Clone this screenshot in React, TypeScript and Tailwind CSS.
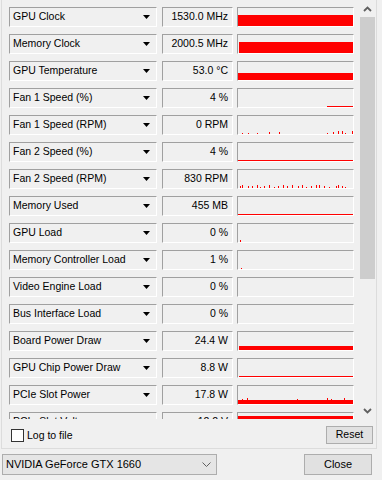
import React from 'react';

type Bar = { x: number; w: number; h: number };

type Sensor = { name: string; value: string; bars: Bar[] };

const spikes = (xs: number[], hs: number[]): Bar[] =>
    xs.map((x, i) => ({ x, w: 1, h: hs[i % hs.length] }));

const sensors: Sensor[] = [
    { name: 'GPU Clock', value: '1530.0 MHz', bars: [{ x: 0, w: 115, h: 11 }] },
    { name: 'Memory Clock', value: '2000.5 MHz', bars: [{ x: 1, w: 114, h: 11 }] },
    { name: 'GPU Temperature', value: '53.0 °C', bars: [{ x: 0, w: 115, h: 7 }] },
    { name: 'Fan 1 Speed (%)', value: '4 %', bars: [{ x: 89, w: 26, h: 1 }] },
    {
        name: 'Fan 1 Speed (RPM)',
        value: '0 RPM',
        bars: spikes([4, 10, 19, 31, 41, 89, 95, 100, 104, 107, 114], [1, 1, 1, 2, 2, 1, 2, 3, 3, 1, 3]),
    },
    { name: 'Fan 2 Speed (%)', value: '4 %', bars: [{ x: 0, w: 115, h: 1 }] },
    {
        name: 'Fan 2 Speed (RPM)',
        value: '830 RPM',
        bars: spikes(
            [2, 4, 10, 14, 19, 22, 26, 31, 36, 40, 45, 49, 54, 60, 64, 68, 73, 78, 81, 86, 91, 98, 100, 104, 107],
            [2, 3, 2, 2, 3, 1, 2, 3, 1, 2, 3, 2, 3, 2, 3, 1, 2, 3, 3, 2, 1, 2, 3, 2, 1]
        ),
    },
    { name: 'Memory Used', value: '455 MB', bars: [{ x: 0, w: 115, h: 1 }] },
    { name: 'GPU Load', value: '0 %', bars: [{ x: 2, w: 1, h: 2 }] },
    { name: 'Memory Controller Load', value: '1 %', bars: [{ x: 3, w: 1, h: 1 }] },
    { name: 'Video Engine Load', value: '0 %', bars: [] },
    { name: 'Bus Interface Load', value: '0 %', bars: [] },
    { name: 'Board Power Draw', value: '24.4 W', bars: [{ x: 1, w: 114, h: 4 }] },
    { name: 'GPU Chip Power Draw', value: '8.8 W', bars: [{ x: 1, w: 114, h: 1 }] },
    {
        name: 'PCIe Slot Power',
        value: '17.8 W',
        bars: [{ x: 0, w: 115, h: 4 }, ...spikes([4, 9, 59, 89, 93, 106], [5, 6, 5, 6, 5, 6])],
    },
    { name: 'PCIe Slot Voltage', value: '12.2 V', bars: [{ x: 0, w: 115, h: 15 }] },
];

const Chevron: React.FC<{ up?: boolean }> = ({ up }) => (
    <svg width="9" height="6" viewBox="0 0 9 6">
        <path
            d={up ? 'M1 5 L4.5 1.5 L8 5' : 'M1 1 L4.5 4.5 L8 1'}
            fill="none"
            stroke="#606060"
            strokeWidth="1.8"
        />
    </svg>
);

const SensorRow: React.FC<{ s: Sensor }> = ({ s }) => (
    <div className="flex h-[20px] mb-[7px] shrink-0">
        {/* name dropdown */}
        <div className="w-[148px] h-full flex items-center justify-between pl-[3px] pr-[6px] border-t border-l border-t-[#a0a0a0] border-l-[#a0a0a0] border-b border-r border-b-white border-r-white">
            <span className="whitespace-nowrap">{s.name}</span>
            <svg width="7" height="4" viewBox="0 0 7 4">
                <path d="M0 0 H7 L3.5 4 Z" fill="#000" />
            </svg>
        </div>
        {/* value */}
        <div className="ml-[5px] w-[71px] h-full flex items-center justify-end pr-[4px] border-t border-l border-t-[#a0a0a0] border-l-[#a0a0a0] border-b border-r border-b-white border-r-white">
            <span className="whitespace-nowrap">{s.value}</span>
        </div>
        {/* graph */}
        <div className="ml-[4px] w-[117px] h-full border-t border-l border-t-[#a0a0a0] border-l-[#a0a0a0] border-b border-r border-b-white border-r-white">
            <svg width="115" height="18" viewBox="0 0 115 18" className="block">
                {s.bars.map((b, i) => (
                    <rect key={i} x={b.x} y={18 - b.h} width={b.w} height={b.h} fill="#ff0000" />
                ))}
            </svg>
        </div>
    </div>
);

const App: React.FC = () => {
    return (
        <div className="w-[382px] h-[480px] bg-[#f0f0f0] overflow-hidden text-black text-[10.5px] font-['Liberation_Sans',Arial,sans-serif]">
            {/* Sensors panel */}
            <div className="ml-[1px] w-[376px] h-[449px] border-l border-r border-b border-[#dcdcdc] flex flex-col">
                <div className="flex h-[419px]">
                    <div className="w-[357px] h-full overflow-hidden pt-[7px] pl-[7px] flex flex-col">
                        {sensors.map((s) => (
                            <SensorRow key={s.name} s={s} />
                        ))}
                    </div>
                    {/* Scrollbar */}
                    <div className="w-[17px] h-full flex flex-col">
                        <div className="h-[17px] flex items-center justify-center">
                            <Chevron up />
                        </div>
                        <div className="flex-1 px-[1px]">
                            <div className="h-[262px] bg-[#cdcdcd]" />
                        </div>
                        <div className="h-[17px] flex items-center justify-center">
                            <Chevron />
                        </div>
                    </div>
                </div>
                {/* Log / Reset */}
                <div className="flex items-start justify-between pl-[9px] pr-[3px]">
                    <label className="flex items-center mt-[9px] gap-[3px]">
                        <span className="w-[13px] h-[13px] border border-[#333333] bg-white" />
                        <span>Log to file</span>
                    </label>
                    <button className="mt-[7px] w-[47px] h-[18px] bg-[#e1e1e1] border border-[#adadad] flex items-center justify-center">
                        Reset
                    </button>
                </div>
            </div>

            {/* Bottom bar */}
            <div className="flex items-center justify-between mt-[5px] pl-[2px] pr-[10px]">
                <div className="w-[215px] h-[21px] bg-[#e5e5e5] border border-[#adadad] flex items-center justify-between pl-[3px] pr-[5px] text-[11px]">
                    <span>NVIDIA GeForce GTX 1660</span>
                    <svg width="9" height="5" viewBox="0 0 9 5">
                        <path d="M0.5 0.5 L4.5 4.5 L8.5 0.5" fill="none" stroke="#606060" strokeWidth="1" />
                    </svg>
                </div>
                <button className="w-[68px] h-[21px] bg-[#e1e1e1] border border-[#adadad] flex items-center justify-center text-[11px]">
                    Close
                </button>
            </div>
        </div>
    );
};

export default App;
